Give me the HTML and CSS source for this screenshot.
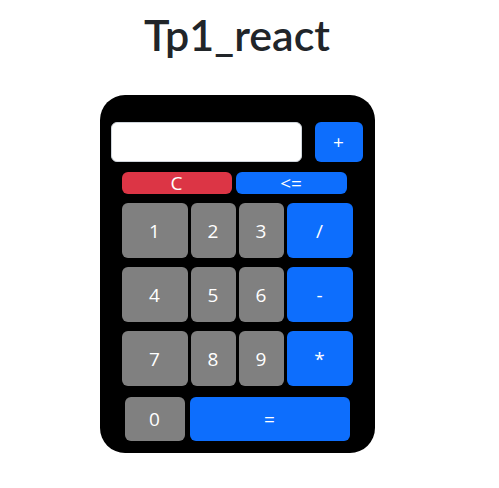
FILE: index.html
```html
<!DOCTYPE html>
<html>
<head>
<meta charset="utf-8">
<link rel="stylesheet" href="styles.css">
</head>
<body>
<div class="app">
  <h1 class="title">Tp1_react</h1>
  <div class="calc">
    <div class="row-top">
      <input class="display" type="text">
      <button class="btn blue plus">+</button>
    </div>
    <div class="row-ctl">
      <button class="btn red ctl">C</button>
      <button class="btn blue ctl2">&lt;=</button>
    </div>
    <div class="row-keys">
      <button class="btn gray k-wide">1</button>
      <button class="btn gray k">2</button>
      <button class="btn gray k">3</button>
      <button class="btn blue k-wide">/</button>
    </div>
    <div class="row-keys">
      <button class="btn gray k-wide">4</button>
      <button class="btn gray k">5</button>
      <button class="btn gray k">6</button>
      <button class="btn blue k-wide">-</button>
    </div>
    <div class="row-keys">
      <button class="btn gray k-wide">7</button>
      <button class="btn gray k">8</button>
      <button class="btn gray k">9</button>
      <button class="btn blue k-wide">*</button>
    </div>
    <div class="row-last">
      <button class="btn gray zero">0</button>
      <button class="btn blue equals">=</button>
    </div>
  </div>
</div>
</body>
</html>
```
FILE: styles.css
```css
html, body {
  margin: 0;
  padding: 0;
  background: #fff;
}
body {
  font-family: "Open Sans", "Noto Sans", sans-serif;
  color: #212529;
}
.app {
  width: 474px;
  display: flex;
  flex-direction: column;
  align-items: center;
}
.title {
  margin: 5px 0 0 0;
  font-family: "Lato", "Open Sans", sans-serif;
  font-size: 43px;
  font-weight: 600;
  line-height: 60px;
  height: 90px;
}
.calc {
  width: 275px;
  height: 358px;
  box-sizing: border-box;
  background: #000;
  border-radius: 25px;
  padding-top: 27px;
  display: flex;
  flex-direction: column;
}
.btn {
  border: none;
  margin: 0;
  padding: 0;
  font-family: "Open Sans", "Noto Sans", sans-serif;
  font-size: 19px;
  color: #fff;
  border-radius: 6px;
  display: flex;
  align-items: center;
  justify-content: center;
}
.blue { background: #0d6efd; }
.red { background: #dc3545; }
.gray { background: #808080; }
.row-top {
  display: flex;
  padding-left: 11px;
  gap: 13px;
  height: 40px;
}
.display {
  width: 191px;
  height: 40px;
  box-sizing: border-box;
  border: 1px solid #ced4da;
  border-radius: 6px;
  background: #fff;
  margin: 0;
  padding: 0;
}
.plus {
  width: 48px;
  height: 40px;
}
.row-ctl {
  display: flex;
  padding-left: 22px;
  gap: 4px;
  margin-top: 10px;
  height: 22px;
}
.ctl { width: 110px; height: 22px; }
.ctl2 { width: 111px; height: 22px; }
.row-keys {
  display: flex;
  padding-left: 22px;
  gap: 3px;
  margin-top: 9px;
  height: 55px;
}
.k-wide { width: 66px; height: 55px; }
.k { width: 45px; height: 55px; }
.row-last {
  display: flex;
  padding-left: 25px;
  gap: 5px;
  margin-top: 11px;
  height: 44px;
}
.zero { width: 60px; height: 44px; }
.equals { width: 160px; height: 44px; }
```
